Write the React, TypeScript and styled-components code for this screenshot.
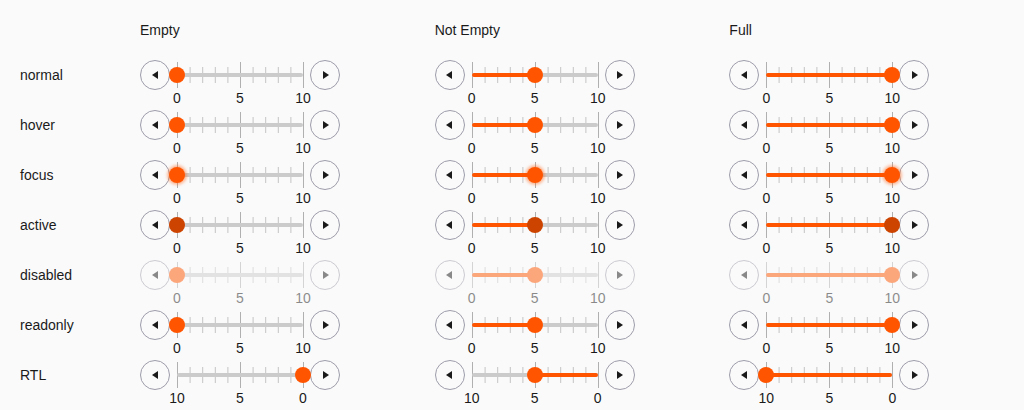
import React from "react";
import styled, { createGlobalStyle, css } from "styled-components";

const GlobalStyle = createGlobalStyle`
  html, body { margin: 0; padding: 0; background: #fafafa; }
  body { font-family: "Liberation Sans", Arial, sans-serif; color: #1a1a1a; }
`;

const ORANGE = "#ff5500";
const ORANGE_DARK = "#cc4400";

type State = "normal" | "hover" | "focus" | "active" | "disabled" | "readonly" | "RTL";

const Page = styled.div`
  display: grid;
  grid-template-columns: 120px repeat(3, 1fr);
  grid-auto-rows: 50px;
  grid-template-rows: 40px;
  padding: 20px 0 0 20px;
`;

const Heading = styled.div`
  font-size: 14px;
  line-height: 20px;
`;

const RowLabel = styled.div`
  font-size: 14px;
  line-height: 30px;
  height: 30px;
`;

const SliderWrap = styled.div<{ $disabled: boolean }>`
  display: flex;
  flex-direction: column;
  width: 200px;
  opacity: ${(p) => (p.$disabled ? 0.5 : 1)};
`;

const Controls = styled.div`
  display: flex;
  align-items: center;
  gap: 7px;
  height: 30px;
`;

const StepButton = styled.button`
  width: 30px;
  height: 30px;
  border-radius: 50%;
  border: 1px solid #9d9dab;
  background: transparent;
  padding: 0;
  display: flex;
  align-items: center;
  justify-content: center;
  flex: 0 0 auto;
  position: relative;
  z-index: 0;
`;

const Arrow = styled.span<{ $dir: "left" | "right" }>`
  width: 0;
  height: 0;
  border-top: 4px solid transparent;
  border-bottom: 4px solid transparent;
  ${(p) =>
    p.$dir === "left"
      ? css`border-right: 6px solid #1a1a1a; margin-right: 1px;`
      : css`border-left: 6px solid #1a1a1a; margin-left: 1px;`}
`;

const TrackArea = styled.div`
  position: relative;
  width: 126px;
  height: 30px;
  flex: 0 0 auto;
  z-index: 1;
`;

const Ticks = styled.svg`
  position: absolute;
  left: 0;
  top: 0;
  overflow: visible;
`;

const Rail = styled.div`
  position: absolute;
  left: 0;
  right: 0;
  top: 13px;
  height: 4px;
  border-radius: 2px;
  background: #cbcbcb;
`;

const Fill = styled.div`
  position: absolute;
  top: 13px;
  height: 4px;
  border-radius: 2px;
  background: ${ORANGE};
`;

const Thumb = styled.div<{ $state: State }>`
  position: absolute;
  top: 7px;
  width: 16px;
  height: 16px;
  margin-left: -8px;
  border-radius: 50%;
  background: ${(p) => (p.$state === "active" ? ORANGE_DARK : ORANGE)};
  ${(p) =>
    p.$state === "focus" &&
    css`box-shadow: 0 0 3px 2px rgba(255, 85, 0, 0.4);`}
`;

const Labels = styled.div`
  display: flex;
  justify-content: space-between;
  width: 126px;
  margin-left: 37px;
  height: 16px;
`;

const TickLabel = styled.span`
  width: 0;
  display: flex;
  justify-content: center;
  font-size: 14px;
  line-height: 16px;
  white-space: nowrap;
`;

const Slider: React.FC<{ value: number; state: State }> = ({ value, state }) => {
  const rtl = state === "RTL";
  const W = 126;
  const pos = ((rtl ? 10 - value : value) / 10) * W;
  const fillLeft = rtl ? pos : 0;
  const fillWidth = rtl ? W - pos : pos;
  const labels = rtl ? ["10", "5", "0"] : ["0", "5", "10"];
  return (
    <SliderWrap $disabled={state === "disabled"}>
      <Controls>
        <StepButton aria-label="decrease">
          <Arrow $dir="left" />
        </StepButton>
        <TrackArea>
          <Ticks width={W} height={30}>
            {Array.from({ length: 11 }, (_, i) => {
              const x = (i / 10) * W + 0.5;
              const major = i % 5 === 0;
              return (
                <line
                  key={i}
                  x1={x}
                  x2={x}
                  y1={major ? 2 : 7}
                  y2={major ? 28 : 23}
                  stroke={major ? "#b0b0b0" : "#c4c4c4"}
                  strokeWidth={1}
                />
              );
            })}
          </Ticks>
          <Rail />
          {fillWidth > 0 && <Fill style={{ left: fillLeft, width: fillWidth }} />}
          <Thumb $state={state} style={{ left: pos }} />
        </TrackArea>
        <StepButton aria-label="increase">
          <Arrow $dir="right" />
        </StepButton>
      </Controls>
      <Labels>
        {labels.map((l) => (
          <TickLabel key={l}>{l}</TickLabel>
        ))}
      </Labels>
    </SliderWrap>
  );
};

const states: State[] = ["normal", "hover", "focus", "active", "disabled", "readonly", "RTL"];
const values = [0, 5, 10];

export default function App() {
  return (
    <>
      <GlobalStyle />
      <Page>
        <div />
        <Heading>Empty</Heading>
        <Heading>Not Empty</Heading>
        <Heading>Full</Heading>
        {states.map((s) => (
          <React.Fragment key={s}>
            <RowLabel>{s}</RowLabel>
            {values.map((v) => (
              <div key={v}>
                <Slider value={v} state={s} />
              </div>
            ))}
          </React.Fragment>
        ))}
      </Page>
    </>
  );
}
